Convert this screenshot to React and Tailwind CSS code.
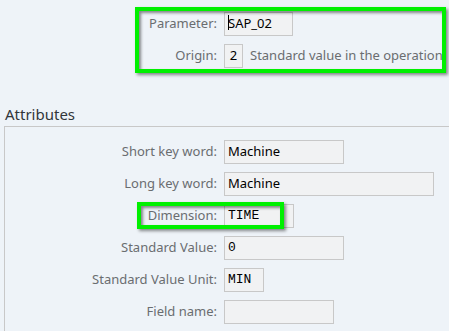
export default function App() {
  const label = 'text-right pr-[7px] text-[#6a6d70] shrink-0';
  const input = 'h-[24px] border border-[#c8c8c8] bg-[#f1f2f3] px-[3px] flex items-center text-black';
  const mono = 'font-["Liberation_Mono",monospace] text-[13px]';

  return (
    <div className='relative w-[449px] h-[331px] overflow-hidden bg-[#eef3f8] font-["Noto_Sans",sans-serif] text-[13px]'>
      {/* top form */}
      <div className="pt-[12px] flex flex-col gap-[8px]">
        <div className="flex items-center">
          <div className={`${label} w-[224px]`}>Parameter:</div>
          <div className={`${input} w-[69px] h-[23px]`}>
            <span className="relative">
              <span className="absolute left-0 top-[1px] w-[1px] h-[15px] bg-black" />
              SAP_02
            </span>
          </div>
        </div>
        <div className="flex items-center">
          <div className={`${label} w-[224px]`}>Origin:</div>
          <div className={`${input} w-[19px] h-[24px] justify-center`}>2</div>
          <div className="ml-[7px] text-[#6a6d70] whitespace-nowrap">Standard value in the operation</div>
        </div>
      </div>

      {/* attributes */}
      <div className="mt-[36px] pl-[5px] text-[15px] leading-[20px] text-[#32363a]">Attributes</div>
      <div className="mt-[2px] ml-[4px] w-[480px] border-l border-t border-[#c8c8c8] pt-[13px] flex flex-col gap-[8px] pb-[20px]">
        <div className="flex items-center">
          <div className={`${label} w-[219px]`}>Short key word:</div>
          <div className={`${input} w-[120px]`}>Machine</div>
        </div>
        <div className="flex items-center">
          <div className={`${label} w-[219px]`}>Long key word:</div>
          <div className={`${input} w-[210px]`}>Machine</div>
        </div>
        <div className="flex items-center">
          <div className={`${label} w-[219px]`}>Dimension:</div>
          <div className={`${input} ${mono} w-[70px]`}>TIME</div>
        </div>
        <div className="flex items-center">
          <div className={`${label} w-[219px]`}>Standard Value:</div>
          <div className={`${input} ${mono} w-[120px]`}>0</div>
        </div>
        <div className="flex items-center">
          <div className={`${label} w-[219px]`}>Standard Value Unit:</div>
          <div className={`${input} ${mono} w-[40px]`}>MIN</div>
        </div>
        <div className="flex items-center">
          <div className={`${label} w-[219px]`}>Field name:</div>
          <div className={`${input} w-[110px]`} />
        </div>
      </div>

      {/* highlight annotations */}
      <div className="absolute left-[135px] top-[7px] w-[311px] h-[66px] border-[4px] border-[#00f000] shadow-[2px_2px_3px_rgba(0,0,0,0.45),inset_2px_2px_3px_rgba(0,0,0,0.45)]" />
      <div className="absolute left-[137px] top-[202px] w-[147px] h-[27px] border-[4px] border-[#00f000] shadow-[2px_2px_3px_rgba(0,0,0,0.45),inset_2px_2px_3px_rgba(0,0,0,0.45)]" />
    </div>
  );
}
